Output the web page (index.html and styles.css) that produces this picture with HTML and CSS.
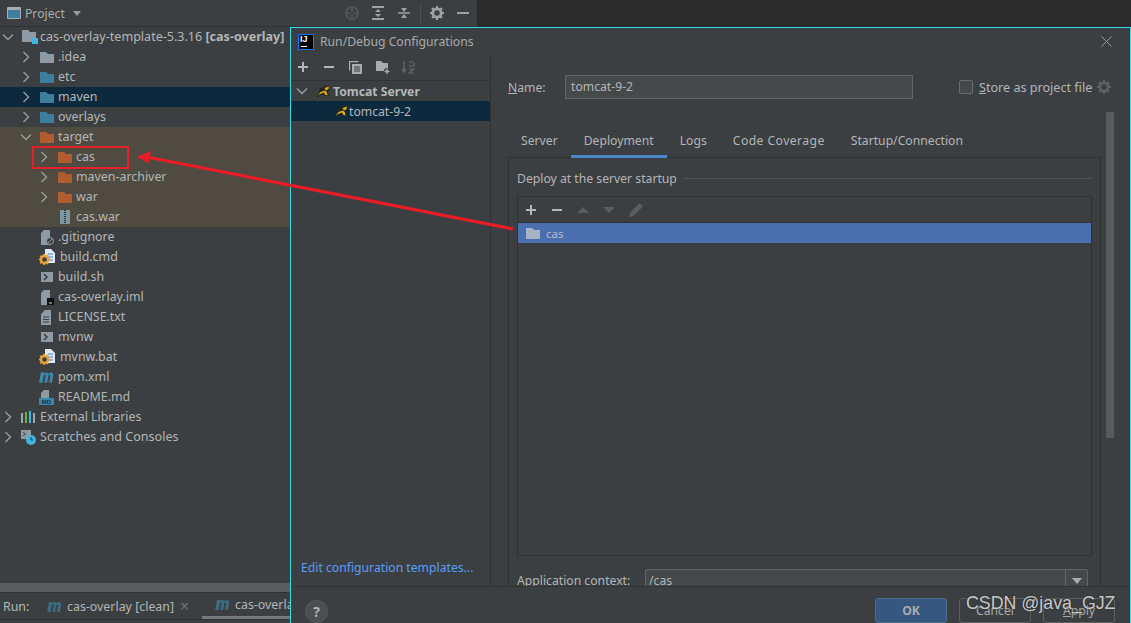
FILE: index.html
```html
<!DOCTYPE html>
<html lang="en">
<head>
<meta charset="utf-8">
<title>Run/Debug Configurations</title>
<link rel="stylesheet" href="styles.css">
</head>
<body>
<svg class="defs" width="0" height="0">
  <symbol id="folder" viewBox="0 0 14 12"><path d="M0 1h6l2 2h6v9H0z" fill="currentColor"/></symbol>
  <symbol id="right" viewBox="0 0 8 12"><path d="M1.5 1l5 5-5 5" fill="none" stroke="#9a9c9e" stroke-width="1.4"/></symbol>
  <symbol id="down" viewBox="0 0 12 8"><path d="M1 1.500l5 5 5-5" fill="none" stroke="#9a9c9e" stroke-width="1.4"/></symbol>
  <symbol id="plus" viewBox="0 0 12 12"><path d="M6 1v10M1 6h10" stroke="#b4b6b8" stroke-width="2"/></symbol>
  <symbol id="minus" viewBox="0 0 12 12"><path d="M1 6h10" stroke="#b4b6b8" stroke-width="2"/></symbol>
  <symbol id="gear" viewBox="0 0 14 14"><circle cx="7" cy="7" r="4.200" fill="none" stroke="currentColor" stroke-width="2.800"/><path d="M7 0v14M0 7h14M2 2l10 10M12 2L2 12" stroke="currentColor" stroke-width="2.200" stroke-dasharray="2.400 9.200 2.400"/></symbol>
  <symbol id="bat" viewBox="0 0 16 16"><path d="M6 0h6l4 4v10H6z" fill="#dfe8f5"/><path d="M9 5h5M9 8h5M9 11h5" stroke="#4b82c3"/><circle cx="5.500" cy="10.500" r="3.500" fill="#3c3f41" stroke="#e8a33a" stroke-width="2.400"/><circle cx="5.500" cy="10.500" r="5" fill="none" stroke="#e8a33a" stroke-width="1.400" stroke-dasharray="1.800 1.800"/></symbol>
  <symbol id="shell" viewBox="0 0 12 10"><path d="M0 0h12v10H0z" fill="#8f9ba4"/><path d="M3 2l3 3-3 3" fill="none" stroke="#3c3f41" stroke-width="1.500"/></symbol>
  <symbol id="tomcat" viewBox="0 0 14 12"><path d="M0 12l3-5 1-4 4-1 1-2 1.500 1.500L13 0l1 4-2 3 1 4H9L8 9l-4 1-2 2z" fill="#26261e"/><path d="M1.500 11L4.500 7 9 5.500l2 2 .5 3-2-.5L8 7.500l-4 1.500zM8.500 3L13 1.500 12.500 4 10 5.500z" fill="#dcae1c"/></symbol>
  <symbol id="mvn" viewBox="0 0 16 12"><path d="M0 12L2 1h3l.2 1.200C6.500.8 9 .6 10 2.400c1.500-1.800 5.800-2 5.200 1.600L13.800 12h-3L12 5c.3-1.800-1.500-1.600-2 0L8.700 12H5.800L7 5c.3-1.800-1.500-1.600-2 0L3.700 12z" fill="currentColor"/></symbol>
</svg>

<div class="ide">
  <aside class="project">
    <header class="project-bar">
      <svg class="project-icon" width="14" height="12" viewBox="0 0 14 12"><path d="M.5.500h13v11H.500z" fill="#3d7f9c" stroke="#a2adb5"/><path d="M1 1h12v2H1z" fill="#a2adb5"/></svg>
      <span class="project-title">Project</span>
      <span class="caret"></span>
      <span class="bar-spacer"></span>
      <svg class="bar-icon dim" width="14" height="14" viewBox="0 0 14 14"><circle cx="7" cy="7" r="6" fill="none" stroke="currentColor" stroke-width="1.500"/><path d="M7 2v3.500M7 8.500V12M2 7h3.500M8.500 7H12" stroke="currentColor" stroke-width="1.500"/></svg>
      <svg class="bar-icon" width="14" height="14" viewBox="0 0 14 14"><path d="M1 1h12M1 13h12" stroke="currentColor" stroke-width="2"/><path d="M7 3l3 3H4zM7 11l3-3H4z" fill="currentColor"/></svg>
      <svg class="bar-icon" width="14" height="14" viewBox="0 0 14 14"><path d="M1 7h12" stroke="currentColor" stroke-width="1.500"/><path d="M7 6L4 2h6zM7 8l3 4H4z" fill="currentColor"/></svg>
      <span class="bar-sep"></span>
      <svg class="bar-icon gear" width="14" height="14"><use href="#gear"/></svg>
      <svg class="bar-icon" width="14" height="14" viewBox="0 0 14 14"><path d="M1 7h12" stroke="currentColor" stroke-width="2"/></svg>
    </header>

    <div class="tree">
      <div class="row">
        <svg class="chev" width="12" height="8"><use href="#down"/></svg>
        <svg class="ic-root" width="16" height="14" viewBox="0 0 16 14"><path d="M0 0h6l2 2h6v10H0z" fill="#8f9ba4"/><path d="M10 8h6v6h-6z" fill="#40b6e0"/></svg>
        <span class="label roomy">cas-overlay-template-5.3.16 <b>[cas-overlay]</b></span>
      </div>
      <div class="row l1"><svg class="chev" width="8" height="12"><use href="#right"/></svg><svg class="ic c-grey" width="14" height="12"><use href="#folder"/></svg><span class="label">.idea</span></div>
      <div class="row l1"><svg class="chev" width="8" height="12"><use href="#right"/></svg><svg class="ic c-blue" width="14" height="12"><use href="#folder"/></svg><span class="label">etc</span></div>
      <div class="row l1 selected"><svg class="chev" width="8" height="12"><use href="#right"/></svg><svg class="ic c-blue" width="14" height="12"><use href="#folder"/></svg><span class="label">maven</span></div>
      <div class="row l1"><svg class="chev" width="8" height="12"><use href="#right"/></svg><svg class="ic c-blue" width="14" height="12"><use href="#folder"/></svg><span class="label">overlays</span></div>
      <div class="excluded">
        <div class="row l1"><svg class="chev" width="12" height="8"><use href="#down"/></svg><svg class="ic c-brown" width="14" height="12"><use href="#folder"/></svg><span class="label">target</span></div>
        <div class="row l2"><svg class="chev" width="8" height="12"><use href="#right"/></svg><svg class="ic c-brown" width="14" height="12"><use href="#folder"/></svg><span class="label">cas</span></div>
        <div class="row l2"><svg class="chev" width="8" height="12"><use href="#right"/></svg><svg class="ic c-brown" width="14" height="12"><use href="#folder"/></svg><span class="label">maven-archiver</span></div>
        <div class="row l2"><svg class="chev" width="8" height="12"><use href="#right"/></svg><svg class="ic c-brown" width="14" height="12"><use href="#folder"/></svg><span class="label">war</span></div>
        <div class="row l2"><span class="chev-space"></span><svg class="ic" width="14" height="14" viewBox="0 0 14 14"><path d="M2 0h10v14H2z" fill="#7f97a3"/><path d="M7 0v14" stroke="#2d3436" stroke-width="2" stroke-dasharray="1 1"/></svg><span class="label">cas.war</span></div>
      </div>
      <div class="row l1"><span class="chev-space"></span><svg class="ic" width="14" height="15" viewBox="0 0 14 15"><path d="M4 0h6v15H1V3z" fill="#8f9ba4"/><circle cx="10" cy="11" r="3.500" fill="#3c3f41" stroke="#8f9ba4"/><path d="M8 13l4-4" stroke="#8f9ba4"/></svg><span class="label">.gitignore</span></div>
      <div class="row l1"><span class="chev-space"></span><svg class="ic-wide" width="16" height="16"><use href="#bat"/></svg><span class="label">build.cmd</span></div>
      <div class="row l1"><span class="chev-space"></span><svg class="ic-small" width="12" height="10"><use href="#shell"/></svg><span class="label">build.sh</span></div>
      <div class="row l1"><span class="chev-space"></span><svg class="ic" width="14" height="15" viewBox="0 0 14 15"><path d="M4 0h6v15H1V3z" fill="#8f9ba4"/><path d="M7 8h7v7H7z" fill="#111"/><path d="M9 13h3" stroke="#ddd"/></svg><span class="label">cas-overlay.iml</span></div>
      <div class="row l1"><span class="chev-space"></span><svg class="ic-small" width="12" height="15" viewBox="0 0 12 15"><path d="M4 0h6v15H0V4z" fill="#8f9ba4"/><path d="M2 7h6M2 9.500h6M2 12h6" stroke="#3c3f41"/></svg><span class="label">LICENSE.txt</span></div>
      <div class="row l1"><span class="chev-space"></span><svg class="ic-small" width="12" height="10"><use href="#shell"/></svg><span class="label">mvnw</span></div>
      <div class="row l1"><span class="chev-space"></span><svg class="ic-wide" width="16" height="16"><use href="#bat"/></svg><span class="label">mvnw.bat</span></div>
      <div class="row l1"><span class="chev-space"></span><svg class="ic c-mvn" width="15" height="12"><use href="#mvn"/></svg><span class="label">pom.xml</span></div>
      <div class="row l1"><span class="chev-space"></span><svg class="ic" width="15" height="15" viewBox="0 0 15 15"><path d="M5 0h5v8H2V3z" fill="#8f9ba4"/><path d="M0 8h15v7H0z" fill="#3d87ab"/><text x="7.500" y="14" class="md-text">MD</text></svg><span class="label">README.md</span></div>
      <div class="row"><svg class="chev" width="8" height="12"><use href="#right"/></svg><svg class="ic" width="15" height="12" viewBox="0 0 15 12"><path d="M1 2v10" stroke="#9aa7b0" stroke-width="2"/><path d="M5 1v11" stroke="#62b543" stroke-width="2"/><path d="M9 0v12" stroke="#40b6e0" stroke-width="2"/><path d="M13 2v10" stroke="#9aa7b0" stroke-width="2"/></svg><span class="label">External Libraries</span></div>
      <div class="row"><svg class="chev" width="8" height="12"><use href="#right"/></svg><svg class="ic" width="15" height="15" viewBox="0 0 15 15"><path d="M0 0h10v9H0z" fill="#8f9ba4"/><path d="M2 2l2.500 2L2 6" fill="none" stroke="#3c3f41"/><circle cx="10" cy="10" r="5" fill="#40b6e0"/><path d="M10 7v3h2" fill="none" stroke="#1c3d4f"/></svg><span class="label roomy">Scratches and Consoles</span></div>
    </div>

    <div class="tree-scroll"></div>
    <div class="run-bar">
      <span class="run-title">Run:</span>
      <span class="run-tab"><svg class="c-mvn-dim" width="15" height="11"><use href="#mvn"/></svg>cas-overlay [clean]<span class="tab-x">×</span></span>
      <span class="run-tab active"><svg class="c-mvn-dim" width="15" height="11"><use href="#mvn"/></svg>cas-overlay</span>
    </div>
  </aside>
  <div class="void"></div>

  <section class="dialog">
    <div class="dlg-title">
      <svg class="ij" width="16" height="16" viewBox="0 0 16 16"><path d="M0 0h16v16H0z" fill="#087cfa"/><path d="M1 1h14v14H1z" fill="#000"/><path d="M3 12h6v1H3z" fill="#fff"/></svg>
      <span class="ij-letters">IJ</span>
      <span class="dlg-name">Run/Debug Configurations</span>
      <svg class="dlg-close" width="11" height="11" viewBox="0 0 11 11"><path d="M.5.500l10 10M10.500.500l-10 10" stroke="#9a9c9e"/></svg>
    </div>
    <div class="dlg-body">
      <div class="cfg-side">
        <div class="cfg-tools">
          <svg width="12" height="12"><use href="#plus"/></svg>
          <svg width="12" height="12"><use href="#minus"/></svg>
          <svg width="13" height="13" viewBox="0 0 13 13"><path d="M.5 9.500V.500h9" stroke="#a9abad" stroke-width="1.400" fill="none"/><path d="M3 3h10v10H3z" fill="#a9abad"/><path d="M5 6h6M5 8h6M5 10h6" stroke="#3c3f41"/></svg>
          <svg width="14" height="13" viewBox="0 0 14 13"><path d="M0 0h5l2 2h5v8H0z" fill="#a9abad"/><path d="M11 7v6M8 10h6" stroke="#3c3f41" stroke-width="3.500"/><path d="M11 7.500v5.500M8.500 10.500h5" stroke="#a9abad" stroke-width="1.400"/></svg>
          <svg class="sort" width="14" height="14" viewBox="0 0 14 14"><path d="M3 1v10M1 9l2 3 2-3" fill="none" stroke="#626567" stroke-width="1.400"/><path d="M8 2h5M8 6h5V3M8 9h5l-5 4h5" fill="none" stroke="#626567" stroke-width="1.200"/></svg>
        </div>
        <div class="cfg-row"><svg class="chev" width="12" height="8"><use href="#down"/></svg><svg class="cat" width="14" height="12"><use href="#tomcat"/></svg><b>Tomcat Server</b></div>
        <div class="cfg-row child"><svg class="cat" width="14" height="12"><use href="#tomcat"/></svg><span>tomcat-9-2</span></div>
        <a class="cfg-link">Edit configuration templates...</a>
      </div>
      <div class="cfg-main">
        <div class="name-row">
          <label class="name-label"><u>N</u>ame:</label>
          <div class="name-input">tomcat-9-2</div>
          <span class="check"></span>
          <span class="store"><u>S</u>tore as project file</span>
          <svg class="gear-dim" width="14" height="14"><use href="#gear"/></svg>
        </div>
        <nav class="tabs">
          <span class="tab">Server</span>
          <span class="tab on">Deployment</span>
          <span class="tab">Logs</span>
          <span class="tab spaced">Code Coverage</span>
          <span class="tab">Startup/Connection</span>
        </nav>
        <div class="tab-panel">
          <div class="group-head"><span>Deploy at the server startup</span><i></i></div>
          <div class="deploy-list">
            <div class="list-tools">
              <svg width="12" height="12"><use href="#plus"/></svg>
              <svg width="12" height="12"><use href="#minus"/></svg>
              <svg class="tool-dim" width="14" height="12" viewBox="0 0 14 12"><path d="M7 3l6 6H1z" fill="#5a5d5f"/></svg>
              <svg class="tool-dim" width="14" height="12" viewBox="0 0 14 12"><path d="M7 9L1 3h12z" fill="#5a5d5f"/></svg>
              <svg class="tool-dim" width="14" height="14" viewBox="0 0 14 14"><path d="M10.500 0L14 3.500 4.500 13 0 14l1-4.500z" fill="#5a5d5f"/></svg>
            </div>
            <div class="list-item"><svg class="c-light" width="14" height="12"><use href="#folder"/></svg><span>cas</span></div>
          </div>
          <div class="context-row">
            <span class="context-label">Application context:</span>
            <div class="combo"><span>/cas</span><em><svg width="10" height="6" viewBox="0 0 10 6"><path d="M0 0h10L5 6z" fill="#a9abad"/></svg></em></div>
          </div>
        </div>
        <div class="v-scroll"></div>
      </div>
    </div>
    <footer class="dlg-foot">
      <span class="help">?</span>
      <span class="foot-space"></span>
      <button class="btn primary">OK</button>
      <button class="btn">Cancel</button>
      <button class="btn"><u>A</u>pply</button>
    </footer>
  </section>

  <svg class="annot" width="1131" height="623" viewBox="0 0 1131 623">
    <rect x="33" y="147" width="95" height="21" fill="none" stroke="#e5202c" stroke-width="2"/>
    <path d="M148 157.200L513 229" stroke="#ea1c28" stroke-width="3.200"/>
    <path d="M137 156.500L151 151l-2.500 12.500z" fill="#ea1c28"/>
  </svg>
  <div class="watermark">CSDN @java_GJZ</div>
</div>
</body>
</html>
```
FILE: styles.css
```css
* { box-sizing: border-box; }
html, body { margin: 0; padding: 0; height: 100%; overflow: hidden; background: #3c3f41; }
body { font-family: "Noto Sans", "Open Sans", sans-serif; font-size: 12.200px; color: #b3b6b7; }
.defs { position: absolute; }
svg { flex: none; display: block; }
.ide { position: relative; display: flex; width: 1131px; height: 623px; overflow: hidden; }
.project { width: 477px; flex: none; display: flex; flex-direction: column; background: #3c3f41; }
.void { flex: 1; background: #2b2b2b; }

.project-bar { height: 27px; display: flex; align-items: center; padding-left: 7px; border-bottom: 1px solid #323232; color: #9a9c9e; }
.project-icon { margin-right: 4px; }
.project-title { color: #a9abad; }
.caret { margin-left: 8px; border: 4.500px solid transparent; border-top: 5px solid #9a9c9e; border-bottom: 0; }
.bar-spacer { flex: 1; }
.bar-icon { margin-right: 12px; color: #9fa1a3; }
.bar-icon.dim { color: #565a5c; }
.bar-sep { width: 1px; height: 19px; background: #4f5254; margin: 0 9px 0 -3px; }
.project-bar .bar-icon:last-child { margin-right: 7px; }

.tree { flex: 1; }
.row { height: 20px; display: flex; align-items: center; white-space: nowrap; }
.row.l1 { padding-left: 18px; }
.row.l2 { padding-left: 36px; }
.row.selected { background: #0d293e; }
.chev { margin-left: 4px; margin-right: 10px; }
.chev[width="12"] { margin-left: 2px; margin-right: 8px; }
.chev-space { width: 22px; flex: none; }
.ic { margin-right: 4px; }
.ic[width="15"] { margin-left: -1px; }
.ic-root { margin-right: 2px; }
.ic-small { margin-left: 1px; margin-right: 5px; }
.ic-wide { margin-left: -1px; margin-right: 5px; }
.label { font-size: 12.400px; line-height: 20px; }
.label.roomy { font-size: 12.550px; }
.md-text { font: 700 6px "Liberation Sans", sans-serif; fill: #22323a; text-anchor: middle; }
.c-grey { color: #8f9ba4; }
.c-blue { color: #3c7f9b; }
.c-brown { color: #b05c30; }
.c-mvn { color: #3d87ab; }
.c-mvn-dim { color: #3b6c80; }
.c-light { color: #a7b4c8; }
.excluded { background: #504b40; }

.tree-scroll { height: 9px; background: #5a5c5e; }
.run-bar { height: 28px; display: flex; align-items: center; border-top: 1px solid #323232; border-bottom: 1px solid #323232; font-size: 12.400px; white-space: nowrap; margin-bottom: 3px; }
.run-title { padding-left: 3px; width: 47px; }
.run-tab { display: flex; align-items: center; gap: 5px; height: 100%; width: 154px; }
.run-tab.active { padding-left: 13px; margin-left: 1px; border-bottom: 3px solid #747a80; }
.tab-x { color: #6f7173; font-size: 16px; margin-left: 1px; }

.dialog { position: absolute; left: 290px; top: 27px; width: 841px; height: 596px; display: flex; flex-direction: column; background: #3c3f41; border: 1px solid #38dbe8; border-bottom: 0; }
.dlg-title { height: 26px; flex: none; display: flex; align-items: center; padding: 1px 0 0 7px; position: relative; }
.ij-letters { position: absolute; left: 9px; top: 6px; font: 700 9px/10px "Liberation Sans", sans-serif; color: #fff; }
.dlg-name { margin-left: 6px; color: #a9abad; }
.dlg-close { margin-left: auto; margin-right: 18px; }
.dlg-body { flex: 1; min-height: 0; display: flex; overflow: hidden; }

.cfg-side { width: 200px; flex: none; display: flex; flex-direction: column; border-right: 1px solid #323232; }
.cfg-tools { height: 27px; flex: none; display: flex; align-items: center; gap: 14px; padding-left: 6px; border-bottom: 1px solid #323232; }
.cfg-tools .sort { margin-left: -3px; }
.cfg-row { height: 20px; display: flex; align-items: center; white-space: nowrap; padding-left: 3px; }
.cfg-row .chev { margin-left: 2px; margin-right: 8px; }
.cfg-row .cat { margin-right: 3px; }
.cfg-row.child { background: #0d293e; padding-left: 43px; }
.cfg-row.child .cat { margin-right: 1px; }
.cfg-link { margin-top: auto; padding: 0 0 9px 10px; color: #589df6; line-height: 19px; white-space: nowrap; }

.cfg-main { flex: 1; min-width: 0; position: relative; display: flex; flex-direction: column; padding: 21px 0 0 17px; }
.name-row { display: flex; align-items: center; height: 24px; flex: none; }
.name-label { width: 57px; flex: none; }
.name-input { width: 348px; height: 24px; flex: none; background: #45494a; border: 1px solid #646464; padding-left: 5px; line-height: 21px; }
.check { width: 14px; height: 14px; margin-left: 46px; flex: none; background: #43494a; border: 1px solid #6b6b6b; border-radius: 2px; }
.store { margin-left: 6px; font-size: 12.600px; white-space: nowrap; }
.gear-dim { margin-left: 5px; color: #5e6163; }
.tabs { display: flex; height: 27px; margin-top: 32px; flex: none; position: relative; z-index: 1; }
.tab { padding: 0 13px; line-height: 19px; white-space: nowrap; }
.tab.on { border-bottom: 3px solid #4a88c7; }
.tab.spaced { letter-spacing: .42px; }
.tab-panel { width: 593px; flex: 1; min-height: 0; margin-top: -1px; border: 1px solid #323232; border-bottom: 0; padding: 13px 8px 0 8px; display: flex; flex-direction: column; }
.group-head { display: flex; align-items: center; gap: 6px; height: 14px; flex: none; white-space: nowrap; }
.group-head i { flex: 1; height: 1px; background: #515456; }
.deploy-list { margin-top: 11px; height: 360px; flex: none; border: 1px solid #2f3132; }
.list-tools { height: 26px; display: flex; align-items: center; gap: 14px; padding-left: 7px; border-bottom: 1px solid #323232; }
.tool-dim { margin-left: -1.500px; }
.list-item { height: 20px; background: #4b6eaf; display: flex; align-items: center; gap: 6px; padding-left: 8px; font-size: 11.500px; color: #b6bfcc; }
.context-row { display: flex; align-items: center; margin-top: 13px; height: 24px; flex: none; }
.context-label { width: 128px; flex: none; padding-bottom: 2px; }
.combo { width: 443px; height: 24px; flex: none; display: flex; background: #45494a; border: 1px solid #646464; border-radius: 2px; padding-left: 3px; line-height: 22px; }
.combo span { flex: 1; }
.combo em { width: 22px; border-left: 1px solid #646464; display: flex; justify-content: center; padding-top: 8px; }
.v-scroll { position: absolute; left: 615px; top: 58px; width: 8px; height: 326px; background: #585a5c; }

.dlg-foot { height: 37px; flex: none; display: flex; align-items: flex-start; border-top: 1px solid #323232; padding: 11px 15px 0 14px; }
.help { width: 23px; height: 23px; border-radius: 50%; background: #4c4f51; border: 1px solid #57595b; text-align: center; font: 700 14px/21px "Noto Sans", sans-serif; margin-top: 2px; }
.foot-space { flex: 1; }
.btn { width: 72px; height: 25px; margin-left: 12px; background: #3c3f41; border: 1px solid #5e6060; border-radius: 3px; color: #a9abad; font: 12.200px "Noto Sans", sans-serif; padding: 0; }
.btn.primary { background: #365880; border-color: #4c708c; font-weight: 700; }

.annot { position: absolute; left: 0; top: 0; pointer-events: none; }
.watermark { position: absolute; left: 966px; top: 592px; font: 17.800px/22px "Liberation Sans", sans-serif; color: #c6c8c8; text-shadow: 0 0 2px #222; white-space: nowrap; }
```
